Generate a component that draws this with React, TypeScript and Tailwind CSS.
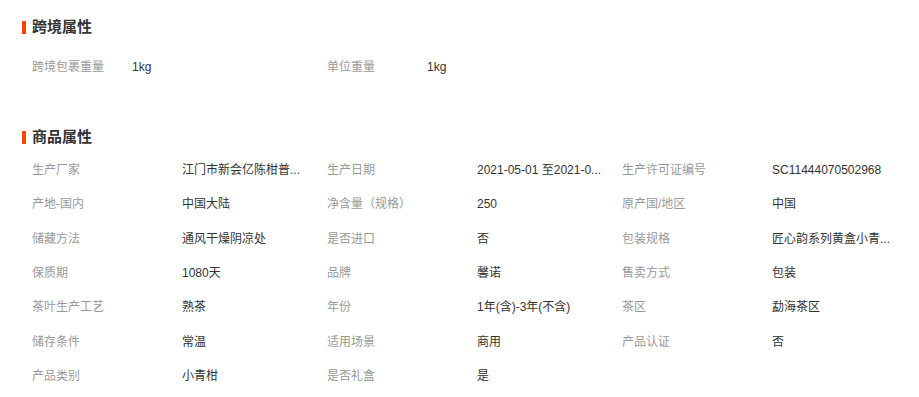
import React from "react";

const cross: [string, string][] = [
  ["跨境包裹重量", "1kg"],
  ["单位重量", "1kg"],
];

const props: [string, string][] = [
  ["生产厂家", "江门市新会亿陈柑普..."],
  ["生产日期", "2021-05-01 至2021-0..."],
  ["生产许可证编号", "SC11444070502968"],
  ["产地-国内", "中国大陆"],
  ["净含量（规格）", "250"],
  ["原产国/地区", "中国"],
  ["储藏方法", "通风干燥阴凉处"],
  ["是否进口", "否"],
  ["包装规格", "匠心韵系列黄盒小青..."],
  ["保质期", "1080天"],
  ["品牌", "馨诺"],
  ["售卖方式", "包装"],
  ["茶叶生产工艺", "熟茶"],
  ["年份", "1年(含)-3年(不含)"],
  ["茶区", "勐海茶区"],
  ["储存条件", "常温"],
  ["适用场景", "商用"],
  ["产品认证", "否"],
  ["产品类别", "小青柑"],
  ["是否礼盒", "是"],
];

function Heading({ title }: { title: string }) {
  return (
    <div className="flex items-center h-[20px]">
      <div className="w-[4px] h-[13px] bg-[#ff4400]" />
      <div className="ml-[6px] text-[15px] font-bold text-[#333333] leading-[20px]">{title}</div>
    </div>
  );
}

export default function App() {
  return (
    <div
      className="w-[919px] h-[397px] bg-white pt-[17px] pl-[22px] text-[12px]"
      style={{ fontFamily: '"Liberation Sans", "Noto Sans CJK SC", sans-serif' }}
    >
      <Heading title="跨境属性" />
      <div className="mt-[20px] pl-[10px] grid grid-cols-[295px_295px_295px]">
        {cross.map(([k, v]) => (
          <div key={k} className="flex items-center h-[20px]">
            <div className="w-[100px] text-[#999999]">{k}</div>
            <div className="text-[#333333] whitespace-nowrap">{v}</div>
          </div>
        ))}
      </div>
      <div className="mt-[50px]">
        <Heading title="商品属性" />
      </div>
      <div className="mt-[6px] pl-[10px] grid grid-cols-[295px_295px_295px]">
        {props.map(([k, v]) => (
          <div key={k} className="flex items-center h-[34.33px]">
            <div className="w-[150px] text-[#999999] whitespace-nowrap">{k}</div>
            <div className="text-[#333333] whitespace-nowrap">{v}</div>
          </div>
        ))}
      </div>
    </div>
  );
}
